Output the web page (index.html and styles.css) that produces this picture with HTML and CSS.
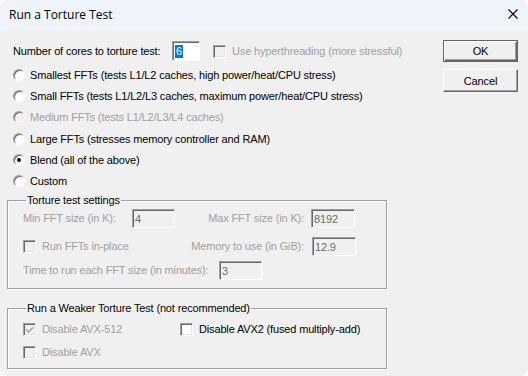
FILE: index.html
```html
<!DOCTYPE html>
<html>
<head>
<meta charset="utf-8">
<link rel="stylesheet" href="styles.css">
</head>
<body>
<div class="window">
  <div class="titlebar">
    <span class="title">Run a Torture Test</span>
    <svg class="close" width="10" height="10" viewBox="0 0 10 10"><path d="M0.5 0.5 L9.5 9.5 M9.5 0.5 L0.5 9.5" stroke="#000" stroke-width="1.1" fill="none"/></svg>
  </div>
  <div class="content">
    <div class="main">
      <div class="cores-row">
        <span class="lbl">Number of cores to torture test:</span>
        <span class="input cores-input"><span class="sel">6</span></span>
        <span class="check disabled ht"><span class="box"></span><span>Use hyperthreading (more stressful)</span></span>
      </div>
      <div class="radios">
        <div class="radio"><span class="dot"></span><span>Smallest FFTs (tests L1/L2 caches, high power/heat/CPU stress)</span></div>
        <div class="radio"><span class="dot"></span><span>Small FFTs (tests L1/L2/L3 caches, maximum power/heat/CPU stress)</span></div>
        <div class="radio disabled"><span class="dot"></span><span>Medium FFTs (tests L1/L2/L3/L4 caches)</span></div>
        <div class="radio"><span class="dot"></span><span>Large FFTs (stresses memory controller and RAM)</span></div>
        <div class="radio checked"><span class="dot"></span><span>Blend (all of the above)</span></div>
        <div class="radio"><span class="dot"></span><span>Custom</span></div>
      </div>
      <fieldset class="group settings">
        <legend>Torture test settings</legend>
        <div class="srow r1">
          <span class="dlbl w1">Min FFT size (in K):</span>
          <span class="input dis w-in">4</span>
          <span class="dlbl rlbl">Max FFT size (in K):</span>
          <span class="input dis w-in2">8192</span>
        </div>
        <div class="srow r2">
          <span class="check disabled w1c"><span class="box"></span><span>Run FFTs in-place</span></span>
          <span class="dlbl rlbl2">Memory to use (in GiB):</span>
          <span class="input dis w-in2">12.9</span>
        </div>
        <div class="srow r3">
          <span class="dlbl w3">Time to run each FFT size (in minutes):</span>
          <span class="input dis w-in">3</span>
        </div>
      </fieldset>
      <fieldset class="group weaker">
        <legend>Run a Weaker Torture Test (not recommended)</legend>
        <div class="wrow">
          <span class="check disabled checked wc1"><span class="box"><svg width="9" height="9" viewBox="0 0 9 9"><path d="M1 3.5 L3.5 6 L8 1.5 L8 3.5 L3.5 8 L1 5.5 Z" fill="#a0a0a0"/></svg></span><span>Disable AVX-512</span></span>
          <span class="check"><span class="box"></span><span>Disable AVX2 (fused multiply-add)</span></span>
        </div>
        <div class="wrow r2w">
          <span class="check disabled"><span class="box"></span><span>Disable AVX</span></span>
        </div>
      </fieldset>
    </div>
    <div class="buttons">
      <div class="btn default"><span>OK</span></div>
      <div class="btn"><span>Cancel</span></div>
    </div>
  </div>
</div>
</body>
</html>
```
FILE: styles.css
```css
* { box-sizing: border-box; }
html, body { margin: 0; padding: 0; background: #ffffff; }
body { width: 528px; height: 376px; overflow: hidden; }
.window {
  width: 528px; height: 376px;
  background: #f0f0f0;
  border-radius: 8px;
  overflow: hidden;
  font-family: "Liberation Sans", Arial, sans-serif;
  font-size: 11px;
  letter-spacing: -0.15px;
  color: #000;
}
.titlebar {
  height: 30px;
  background: #eef4f9;
  display: flex;
  align-items: center;
  padding-left: 9px;
  padding-right: 10px;
  letter-spacing: 0;
}
.title {
  font-family: "Open Sans", "Noto Sans", sans-serif;
  font-size: 12px;
  flex: 1;
  padding-bottom: 1px;
}
.close { display: block; margin-right: 0px; margin-bottom: 2px; }
.content {
  display: flex;
  padding: 10px 10px 0 7px;
}
.main { flex: 1; }
.buttons {
  width: 75px;
  display: flex;
  flex-direction: column;
  gap: 7px;
}
.btn {
  height: 23px;
  display: flex; align-items: center; justify-content: center;
  background: #f0f0f0;
  border: 1px solid;
  border-color: #ffffff #696969 #696969 #ffffff;
  box-shadow: inset -1px -1px 0 #a0a0a0;
}
.btn.default {
  height: 22px;
  border: 1px solid #646464;
  box-shadow: inset 1px 1px 0 #ffffff, inset -1px -1px 0 #696969, inset -2px -2px 0 #a0a0a0;
}
.cores-row {
  display: flex;
  align-items: center;
  height: 20px;
  margin-top: 1px;
  padding-left: 6px;
}
.lbl { width: 159px; }
.input {
  display: inline-flex;
  align-items: center;
  height: 20px;
  background: #fff;
  border: 1px solid;
  border-color: #a0a0a0 #ffffff #ffffff #a0a0a0;
  box-shadow: inset 1px 1px 0 #696969;
  padding-left: 2px;
  padding-top: 1px;
  flex: none;
}
.cores-input { width: 28px; }
.sel { background: #0078d7; color: #fff; padding: 0 1px; line-height: 13px; }
.check { display: inline-flex; align-items: center; gap: 6px; }
.check .box {
  width: 13px; height: 13px;
  background: #fff;
  border: 1px solid;
  border-color: #a0a0a0 #ffffff #ffffff #a0a0a0;
  box-shadow: inset 1px 1px 0 #696969, inset -1px -1px 0 #e3e3e3;
  display: flex; align-items: center; justify-content: center;
  flex: none;
}
.check.disabled { color: #a0a0a0; }
.check.disabled .box { background: #f0f0f0; }
.check .box svg { display: block; }
.ht { margin-left: 13px; }
.radios { margin-top: 3px; }
.radio {
  height: 21.3px;
  display: flex;
  align-items: center;
  gap: 5px;
  padding-left: 6px;
}
.radio .dot {
  width: 12px; height: 12px;
  border-radius: 50%;
  background: #fff;
  border: 1px solid;
  border-color: #a0a0a0 #ffffff #ffffff #a0a0a0;
  box-shadow: inset 1px 1px 0 #696969;
  position: relative;
  flex: none;
}
.radio.checked .dot::after {
  content: "";
  position: absolute;
  left: 3px; top: 3px;
  width: 4px; height: 4px;
  border-radius: 50%;
  background: #000;
}
.radio.disabled { color: #a0a0a0; }
.radio.disabled .dot { background: #f0f0f0; }
.group {
  margin: 0;
  border: 1px solid #a0a0a0;
  box-shadow: 1px 1px 0 #ffffff, inset 1px 1px 0 #ffffff;
  width: 380px;
  padding: 0 0 0 15px;
}
.group legend {
  padding: 0 1px;
  margin-left: 3px;
  line-height: 13px;
}
.settings { margin-top: 2px; padding-bottom: 8px; }
.srow { display: flex; align-items: center; height: 19px; }
.r1 { margin-top: 2px; }
.r2 { margin-top: 9px; }
.r3 { margin-top: 5px; }
.dlbl { color: #a0a0a0; white-space: nowrap; }
.w1 { width: 109px; flex: none; }
.w1c { width: 180px; color: #a0a0a0; flex: none; }
.input.dis { background: #f0f0f0; height: 19px; color: #6d6d6d; }
.w-in { width: 43px; }
.w-in2 { width: 44px; }
.rlbl, .rlbl2 { display: flex; justify-content: flex-end; flex: none; }
.rlbl { width: 136px; padding-right: 7px; }
.rlbl2 { width: 109px; padding-right: 8px; }
.w3 { width: 196px; flex: none; }
.weaker { margin-top: 13px; height: 67px; }
.wrow { display: flex; align-items: center; height: 15px; margin-top: 7px; }
.r2w { margin-top: 8px; }
.wc1 { width: 157px; flex: none; }
```
